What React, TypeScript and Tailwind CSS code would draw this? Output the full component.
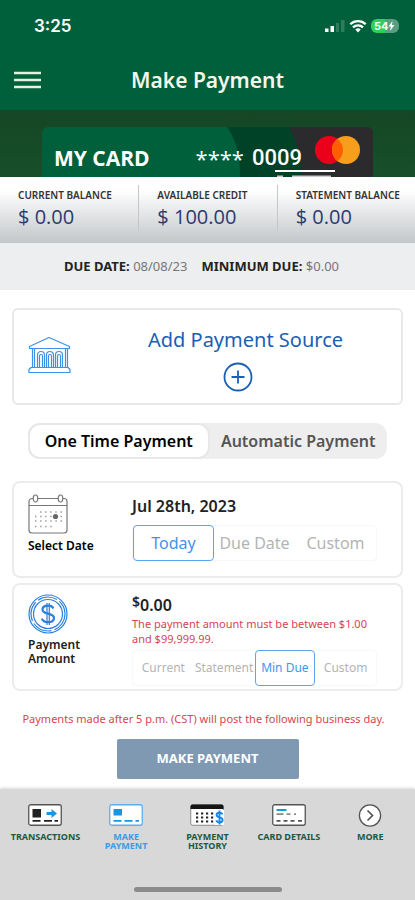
import {useState} from 'react'

const balances = [
    {name: 'CURRENT BALANCE', value: '$ 0.00'},
    {name: 'AVAILABLE CREDIT', value: '$ 100.00'},
    {name: 'STATEMENT BALANCE', value: '$ 0.00'},
]

const navigation = [
    {name: 'TRANSACTIONS', icon: TransactionsIcon},
    {name: 'MAKE PAYMENT', icon: PaymentIcon, current: true},
    {name: 'PAYMENT HISTORY', icon: HistoryIcon},
    {name: 'CARD DETAILS', icon: DetailsIcon},
    {name: 'MORE', icon: MoreIcon},
]

const paymentTypes = ['One Time Payment', 'Automatic Payment']
const dateOptions = ['Today', 'Due Date', 'Custom']
const amountOptions = ['Current', 'Statement', 'Min Due', 'Custom']

function classNames(...classes: (string | false | undefined)[]) {
    return classes.filter(Boolean).join(' ')
}

function TransactionsIcon() {
    return (
        <svg width="34" height="22" viewBox="0 0 34 22" aria-hidden="true">
            <rect x="0.75" y="0.75" width="32.5" height="20.5" rx="2" fill="#fff" stroke="#555" strokeWidth="1.3"/>
            <rect x="4.5" y="5" width="8.5" height="8.5" fill="#222"/>
            <path d="M18.500 8h5V5l5.500 4.500-5.500 4.500V11h-5z" fill="#1a96e0"/>
            <path d="M4.500 16.800h8M16 16.800h8M26.500 16.800H30" stroke="#222" strokeWidth="1.8"/>
        </svg>
    )
}

function PaymentIcon() {
    return (
        <svg width="34" height="22" viewBox="0 0 34 22" aria-hidden="true">
            <rect x="0.75" y="0.75" width="32.5" height="20.5" rx="2" fill="#fff" stroke="#5aaef0" strokeWidth="1.3"/>
            <rect x="4.5" y="5" width="8.5" height="6.5" fill="#1a96e0"/>
            <path d="M4.500 16.800h8M15.500 16.800h8M26.500 16.800H30" stroke="#1a96e0" strokeWidth="1.8"/>
        </svg>
    )
}

function HistoryIcon() {
    return (
        <svg width="34" height="22" viewBox="0 0 34 22" aria-hidden="true">
            <rect x="0.75" y="0.75" width="32.5" height="20.5" rx="2" fill="#fff" stroke="#888"/>
            <path d="M.5 5V2.500a2 2 0 0 1 2-2h29a2 2 0 0 1 2 2V5z" fill="#151515"/>
            <path d="M6 9.500h18M6 13.500h18M6 17.500h18" stroke="#222" strokeWidth="2.2" strokeDasharray="2.2 2.8"/>
            <path d="M25 6h9v15h-9z" fill="#fff"/>
            <path d="M32.500 10.500c-.5-1.300-1.600-1.800-3-1.800-1.700 0-2.900.9-2.900 2.300 0 3.200 6 1.700 6 4.900 0 1.500-1.300 2.400-3.100 2.400-1.600 0-2.800-.6-3.200-2M29.500 6.500v14" fill="none" stroke="#1a86e6" strokeWidth="1.9"/>
        </svg>
    )
}

function DetailsIcon() {
    return (
        <svg width="34" height="22" viewBox="0 0 34 22" aria-hidden="true">
            <rect x="0.75" y="0.75" width="32.5" height="20.5" rx="2" fill="#fff" stroke="#555" strokeWidth="1.3"/>
            <path d="M4.500 6h10" stroke="#1a96e0" strokeWidth="2"/>
            <path d="M4.500 10.200h7M14.500 10.200h4M22 10.200h2" stroke="#8a8a8a" strokeWidth="1.8"/>
            <path d="M4.500 16.800h4M11.500 16.800h4M18.500 16.800h4M26 16.800h4" stroke="#555" strokeWidth="1.8"/>
        </svg>
    )
}

function MoreIcon() {
    return (
        <svg width="24" height="24" viewBox="0 0 24 24" fill="none" stroke="#555" aria-hidden="true">
            <circle cx="12" cy="11.5" r="10.6" fill="#fff" strokeWidth="1.3"/>
            <path d="m9.500 6.500 5 5-5 5" strokeWidth="1.7"/>
        </svg>
    )
}

function BankIcon() {
    return (
        <svg width="44" height="38" viewBox="0 0 44 38" fill="none" stroke="#3d92e8" strokeWidth="1.2" className="mb-1 shrink-0" aria-hidden="true">
            <path d="M21 1.500 41.500 10.500v2H1.500v-2z" strokeLinejoin="round"/>
            <path d="M4.500 12.500v19M6.500 12.500v19M39.500 12.500v19M37.500 12.500v19"/>
            <path d="M9.500 31.500V19a3.500 3.500 0 0 1 7 0v12.500M11.500 31.500V20a1.500 1.500 0 0 1 3 0v11.500M18.500 31.500V19a3.500 3.500 0 0 1 7 0v12.500M20.500 31.500V20a1.500 1.500 0 0 1 3 0v11.500M27.500 31.500V19a3.500 3.500 0 0 1 7 0v12.500M29.500 31.500V20a1.500 1.500 0 0 1 3 0v11.500"/>
            <path d="M3 31.500h37l2 2v3H1v-3z" strokeLinejoin="round"/>
        </svg>
    )
}

function CalendarIcon() {
    return (
        <svg width="40" height="40" viewBox="0 0 40 40" fill="none" stroke="#777" strokeWidth="1.2" aria-hidden="true">
            <path d="M5 4.500H4a3 3 0 0 0-3 3V36a3 3 0 0 0 3 3h32a3 3 0 0 0 3-3V7.500a3 3 0 0 0-3-3h-1M10 4.500h20M1 11.500h38"/>
            <ellipse cx="7.5" cy="4.5" rx="2.3" ry="3.5"/>
            <ellipse cx="32.5" cy="4.5" rx="2.3" ry="3.5"/>
            <path d="M12 18h22M7 22.500h27M7 27h27M7 32.500h20" stroke="#999" strokeWidth="1.4" strokeDasharray="1.4 3.7"/>
            <circle cx="27.5" cy="22.5" r="2.6" fill="#666" stroke="none"/>
        </svg>
    )
}

function DollarIcon() {
    return (
        <svg width="40" height="40" viewBox="0 0 40 40" fill="none" stroke="#2b7fe0" strokeWidth="1.2" aria-hidden="true">
            <circle cx="20" cy="20" r="19"/>
            <circle cx="20" cy="20" r="17" strokeDasharray="20 3"/>
            <circle cx="20" cy="20" r="14.5"/>
            <path d="M25.500 14.500c-1-2-3-2.800-5.500-2.800-3.200 0-5.500 1.500-5.500 4 0 5.300 11.500 2.600 11.500 8.200 0 2.600-2.500 4.200-6 4.200-3 0-5.300-1.200-6.200-3.500" strokeWidth="2.2"/>
            <path d="M19 9v22M21.300 9v22"/>
        </svg>
    )
}

function StatusBar() {
    return (
        <div className="flex h-[52px] items-center justify-between pr-4 pl-[34px]">
            <span className="font-['Inter'] text-[17px] leading-6 font-semibold">3:25</span>
            <div className="flex items-center gap-1">
                <svg width="20" height="12" viewBox="0 0 20 12" aria-hidden="true">
                    <path d="M0 8.500h3.500V12H0zM5.500 6H9v6H5.500z" fill="#fff"/>
                    <path d="M11 3h3v9h-3zM16 0h3.500v12H16z" fill="#2f7b5c"/>
                </svg>
                <svg width="18" height="14" viewBox="0 0 18 14" fill="none" stroke="#fff" strokeWidth="2.3" aria-hidden="true">
                    <path d="M1.300 5.200a11 11 0 0 1 15.400 0M4 8.300a7.200 7.200 0 0 1 10 0"/>
                    <path d="M9 13.500 6.300 10.600a4 4 0 0 1 5.400 0z" fill="#fff" stroke="none"/>
                </svg>
                <div className="flex h-[14px] w-[28px] items-center overflow-hidden rounded-md bg-linear-to-r from-[#2fd058] from-50% to-[#5b9d81] to-50% pl-[3px]">
                    <span className="font-['Inter'] text-[11px] leading-none font-bold">54</span>
                    <svg width="7" height="10" viewBox="0 0 7 10" fill="#fff" aria-hidden="true">
                        <path d="M4.500 0 .5 5.500h2.300L2 10l4.500-6H4z"/>
                    </svg>
                </div>
            </div>
        </div>
    )
}

function CardBanner() {
    return (
        <div className="h-[67px] overflow-hidden bg-linear-to-b from-[#154625] to-[#184f2a] px-[42px] pt-[17px]">
            <div className="relative h-[50px] overflow-hidden rounded-t-md bg-[#00603c] text-white">
                {/* Card art */}
                <svg className="absolute top-0 right-0" width="150" height="50" viewBox="0 0 150 50" aria-hidden="true">
                    <path d="M4 0h146v50H17C17 30 14 14 4 0z" fill="#004227"/>
                    <path d="M66 0h84v50H79C78 30 74 14 66 0z" fill="#2b2b2d"/>
                    <circle cx="106" cy="23" r="14" fill="#eb001b"/>
                    <circle cx="123" cy="23" r="14" fill="#f79e1b"/>
                    <path d="M114.500 11.900a14 14 0 0 1 0 22.200 14 14 0 0 1 0-22.200z" fill="#ff5f00"/>
                    <path d="M52 43h60v2H52z" fill="#fff"/>
                    <path d="M54 48.500h6V50h-6zM69 48.500h39V50H69z" fill="#ccc"/>
                </svg>
                <div className="relative flex h-[50px] items-center justify-between pt-3 pr-[71px] pl-3 whitespace-nowrap">
                    <span className="font-['Open_Sans'] text-[21px] leading-7 font-bold">MY CARD</span>
                    <span className="flex gap-2 font-['Roboto'] text-[22px] leading-7 font-medium">
                        <span className="font-['Open_Sans']">****</span>
                        <span>0009</span>
                    </span>
                </div>
            </div>
        </div>
    )
}

function Options({options, value, onChange, className}: {
    options: string[], value: string, onChange: (value: string) => void, className: string
}) {
    return (
        <div className={classNames('flex h-9 w-full rounded-sm border border-[#f8f8f8]', className)}>
            {options.map((option) => (
                <button
                    key={option}
                    type="button"
                    aria-pressed={option === value}
                    onClick={() => onChange(option)}
                    className={classNames(
                        '-my-px flex-1 rounded-sm border whitespace-nowrap',
                        option === value ? 'border-[#5aa5ee] text-[#3f94ea]' : 'border-transparent text-[#b4b4b4]',
                    )}
                >
                    {option}
                </button>
            ))}
        </div>
    )
}

export default function App() {
    const [type, setType] = useState('One Time Payment')
    const [date, setDate] = useState('Today')
    const [amount, setAmount] = useState('Min Due')

    return (
        <div className="flex min-h-screen flex-col bg-white font-['Noto_Sans',sans-serif]">
            <header className="h-[110px] bg-[#00603c] text-white">
                <StatusBar/>
                <div className="relative flex h-14 items-center justify-center">
                    <button type="button" aria-label="Open menu" className="absolute left-[14px]">
                        <svg width="27" height="18" viewBox="0 0 27 18" stroke="#e6f0dc" strokeWidth="2.5" aria-hidden="true">
                            <path d="M0 2h27M0 9h27M0 16h27"/>
                        </svg>
                    </button>
                    <h1 className="text-[21px] leading-7 font-semibold text-[#f4f6ea]">Make Payment</h1>
                </div>
            </header>

            <CardBanner/>

            <dl className="grid h-[66px] grid-cols-3 bg-linear-to-b from-white from-20% to-[#c3c7ca] pt-2">
                {balances.map((item, i) => (
                    <div key={item.name} className={classNames('h-[46px] pl-[18px] whitespace-nowrap', i > 0 && 'border-l border-[#c4c6c8]')}>
                        <dt className="pt-[2px] text-[10px] leading-4 font-semibold text-[#333]">{item.name}</dt>
                        <dd className="font-['Open_Sans'] text-xl leading-7 text-[#2c3a6e]">{item.value}</dd>
                    </div>
                ))}
            </dl>

            <div className="flex h-[47px] items-center justify-center gap-[14px] bg-[#eceef0] pr-3 text-[13px] whitespace-nowrap text-[#777]">
                <p><b className="font-bold text-[#222]">DUE DATE:</b> 08/08/23</p>
                <p><b className="font-bold text-[#222]">MINIMUM DUE:</b> $0.00</p>
            </div>

            <main className="flex flex-col px-3 pt-[18px]">
                <section className="flex h-[97px] items-center rounded-md border-2 border-[#e8e8e8] px-[14px]">
                    <BankIcon/>
                    <button type="button" className="flex flex-1 flex-col items-center gap-2 pt-1 pl-8 text-xl leading-7 text-[#1a5fb4]">
                        Add Payment Source
                        <svg className="mr-4" width="30" height="30" viewBox="0 0 30 30" fill="none" stroke="#1a5fb4" strokeWidth="1.8" aria-hidden="true">
                            <circle cx="15" cy="15" r="13.5"/>
                            <path d="M15 8.500v13M8.500 15h13"/>
                        </svg>
                    </button>
                </section>

                <div className="mx-4 mt-[18px] flex h-9 rounded-xl bg-[#eee]">
                    {paymentTypes.map((name) => (
                        <button
                            key={name}
                            type="button"
                            aria-pressed={name === type}
                            onClick={() => setType(name)}
                            className={classNames(
                                'flex-1 rounded-xl text-base font-semibold whitespace-nowrap',
                                name === type ? 'border-2 border-[#e8e8e8] bg-white text-black' : 'text-[#555]',
                            )}
                        >
                            {name}
                        </button>
                    ))}
                </div>

                <section className="mt-[22px] flex h-[97px] rounded-lg border-2 border-[#ececec] pt-[11px] pr-6 pl-[14px]">
                    <div className="w-[104px] shrink-0">
                        <CalendarIcon/>
                        <h2 className="mt-1 text-xs leading-4 font-semibold">Select Date</h2>
                    </div>
                    <div className="flex-1">
                        <p className="text-base leading-6 font-semibold text-[#222]">Jul 28th, 2023</p>
                        <Options options={dateOptions} value={date} onChange={setDate} className="mt-[7px] text-base"/>
                    </div>
                </section>

                <section className="mt-[5px] flex h-[108px] rounded-lg border-2 border-[#ececec] pt-[9px] pr-6 pl-[14px]">
                    <div className="w-[104px] shrink-0">
                        <DollarIcon/>
                        <h2 className="mt-1 w-16 text-xs leading-[14px] font-semibold text-[#222]">Payment Amount</h2>
                    </div>
                    <div className="flex-1">
                        <p className="flex items-start text-base leading-[22px] font-semibold text-[#222]">
                            <span className="text-sm leading-4">$</span>
                            0.00
                        </p>
                        <p className="text-[11px] leading-[15px] text-[#d64550]">The payment amount must be between $1.00 and $99,999.99.</p>
                        <Options options={amountOptions} value={amount} onChange={setAmount} className="mt-1 text-xs"/>
                    </div>
                </section>

                <p className="mt-5 pr-2 text-center text-[11px] leading-4 whitespace-nowrap text-[#d64550]">
                    Payments made after 5 p.m. (CST) will post the following business day.
                </p>
                <button type="button" className="mt-3 h-10 w-[182px] self-center rounded-xs bg-[#7f99b3] text-[13px] font-bold text-white">
                    MAKE PAYMENT
                </button>
            </main>

            <footer className="mt-auto flex h-[111px] flex-col justify-between bg-[#d8d8d8] px-1 pt-[15px] pb-2 shadow-[0_-1px_3px_#d8d8d8]">
                <nav className="grid grid-cols-5">
                    {navigation.map((item) => (
                        <a
                            key={item.name}
                            href="#"
                            aria-current={item.current ? 'page' : undefined}
                            className={classNames(
                                'flex flex-col items-center text-center text-[9px] leading-[9px] font-bold',
                                item.current ? 'text-[#3a9bea]' : 'text-[#1b5a40]',
                            )}
                        >
                            <span className="flex h-7 items-start"><item.icon/></span>
                            <span className="max-w-[68px]">{item.name}</span>
                        </a>
                    ))}
                </nav>
                <div className="h-[5px] w-[148px] self-center rounded-full bg-[#8b8b8b]"/>
            </footer>
        </div>
    )
}
